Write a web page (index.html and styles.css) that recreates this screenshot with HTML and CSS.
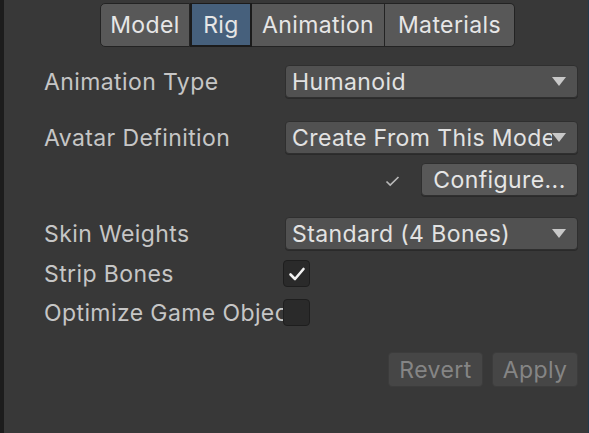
FILE: index.html
```html
<!DOCTYPE html>
<html>
<head>
<meta charset="utf-8">
<link rel="stylesheet" href="styles.css">
</head>
<body>
<div class="panel">
  <div class="tabs">
    <div class="tab t-model">Model</div>
    <div class="tab t-rig active">Rig</div>
    <div class="tab t-anim">Animation</div>
    <div class="tab t-mat">Materials</div>
  </div>

  <div class="row r1">
    <div class="label">Animation Type</div>
    <div class="field"><div class="dropdown"><span class="dd-text">Humanoid</span><span class="arrow"></span></div></div>
  </div>

  <div class="row r2">
    <div class="label">Avatar Definition</div>
    <div class="field"><div class="dropdown"><span class="dd-text">Create From This Model</span><span class="arrow"></span></div></div>
  </div>

  <div class="row r3">
    <div class="field right">
      <svg class="tick" width="15" height="12" viewBox="0 0 15 12"><polyline points="1.5,6.5 5.2,10 13.5,2" fill="none" stroke="#b8b8b8" stroke-width="1.7"/></svg>
      <div class="button config">Configure...</div>
    </div>
  </div>

  <div class="row r4">
    <div class="label">Skin Weights</div>
    <div class="field"><div class="dropdown"><span class="dd-text">Standard (4 Bones)</span><span class="arrow"></span></div></div>
  </div>

  <div class="row r5">
    <div class="label">Strip Bones</div>
    <div class="field"><div class="checkbox"><svg width="18" height="16" viewBox="0 0 18 16"><polyline points="2.5,8.5 7,13 15.5,3" fill="none" stroke="#f2f2f2" stroke-width="2.6" stroke-linecap="round" stroke-linejoin="round"/></svg></div></div>
  </div>

  <div class="row r6">
    <div class="label">Optimize Game Objects</div>
    <div class="field"><div class="checkbox"></div></div>
  </div>

  <div class="actions">
    <div class="button disabled revert">Revert</div>
    <div class="button disabled apply">Apply</div>
  </div>
</div>
</body>
</html>
```

FILE: styles.css
```css
html, body {
  margin: 0;
  padding: 0;
  background: #383838;
  width: 589px;
  height: 433px;
  overflow: hidden;
}

.panel {
  box-sizing: border-box;
  width: 589px;
  height: 433px;
  border-left: 4px solid #1c1c1c;
  border-right: 1px solid #24394a;
  background: #383838;
  font-family: Inter, "Noto Sans", sans-serif;
  font-size: 23px;
  letter-spacing: 0.4px;
  color: #c6c6c6;
  padding-top: 3px;
}

.tabs {
  display: flex;
  margin-left: 96px;
  height: 44px;
}

.tab {
  box-sizing: border-box;
  height: 44px;
  display: flex;
  align-items: center;
  justify-content: center;
  background: #585858;
  color: #e6e6e6;
  border: 1px solid #232323;
  border-left-width: 0;
}
.t-model {
  width: 90px;
  border-left-width: 1px;
  border-radius: 5px 0 0 5px;
}
.t-rig { width: 62px; }
.t-anim { width: 133px; }
.t-mat {
  width: 130px;
  border-radius: 0 5px 5px 0;
}
.tab.active {
  background: #46607c;
  border: 2px solid #1b1b1b;
  border-top-width: 1px;
}

.row {
  display: flex;
  align-items: center;
  height: 33px;
  padding-left: 40px;
  padding-right: 10px;
}
.r1 { margin-top: 18px; }
.r2 { margin-top: 23px; }
.r3 { margin-top: 9px; }
.r4 { margin-top: 21px; }
.r5 { margin-top: 10px; height: 27px; }
.r6 { margin-top: 12px; height: 27px; }

.label {
  width: 241px;
  flex: none;
  white-space: nowrap;
  overflow: hidden;
}

.field {
  flex: 1;
  display: flex;
  align-items: center;
  min-width: 0;
}
.field.right {
  justify-content: flex-end;
}

.dropdown {
  box-sizing: border-box;
  width: 100%;
  height: 33px;
  background: #515151;
  border: 1px solid #2f2f2f;
  border-radius: 4px;
  display: flex;
  align-items: center;
  padding-left: 6px;
  padding-right: 11px;
  color: #e2e2e2;
  box-shadow: 0 1px 0 #2a2a2a;
}
.dd-text {
  flex: 1;
  white-space: nowrap;
  overflow: hidden;
  min-width: 0;
}
.arrow {
  flex: none;
  width: 0;
  height: 0;
  border-left: 7px solid transparent;
  border-right: 7px solid transparent;
  border-top: 9px solid #c8c8c8;
}

.tick {
  margin-right: 21px;
  margin-top: 2px;
}

.button {
  box-sizing: border-box;
  height: 33px;
  display: flex;
  align-items: center;
  justify-content: center;
  background: #585858;
  color: #e6e6e6;
  border: 1px solid #2f2f2f;
  border-radius: 4px;
  box-shadow: 0 1px 0 #2a2a2a;
}
.config {
  width: 157px;
}

.checkbox {
  box-sizing: border-box;
  width: 27px;
  height: 27px;
  margin-left: -2px;
  background: #2a2a2a;
  border: 1px solid #1e1e1e;
  border-radius: 4px;
  display: flex;
  align-items: center;
  justify-content: center;
}

.actions {
  display: flex;
  justify-content: flex-end;
  gap: 9px;
  margin-top: 26px;
  padding-right: 10px;
}
.button.disabled {
  height: 35px;
  background: #464646;
  color: #858585;
  border-color: #3c3c3c;
  box-shadow: none;
}
.revert { width: 95px; }
.apply { width: 86px; }
```
